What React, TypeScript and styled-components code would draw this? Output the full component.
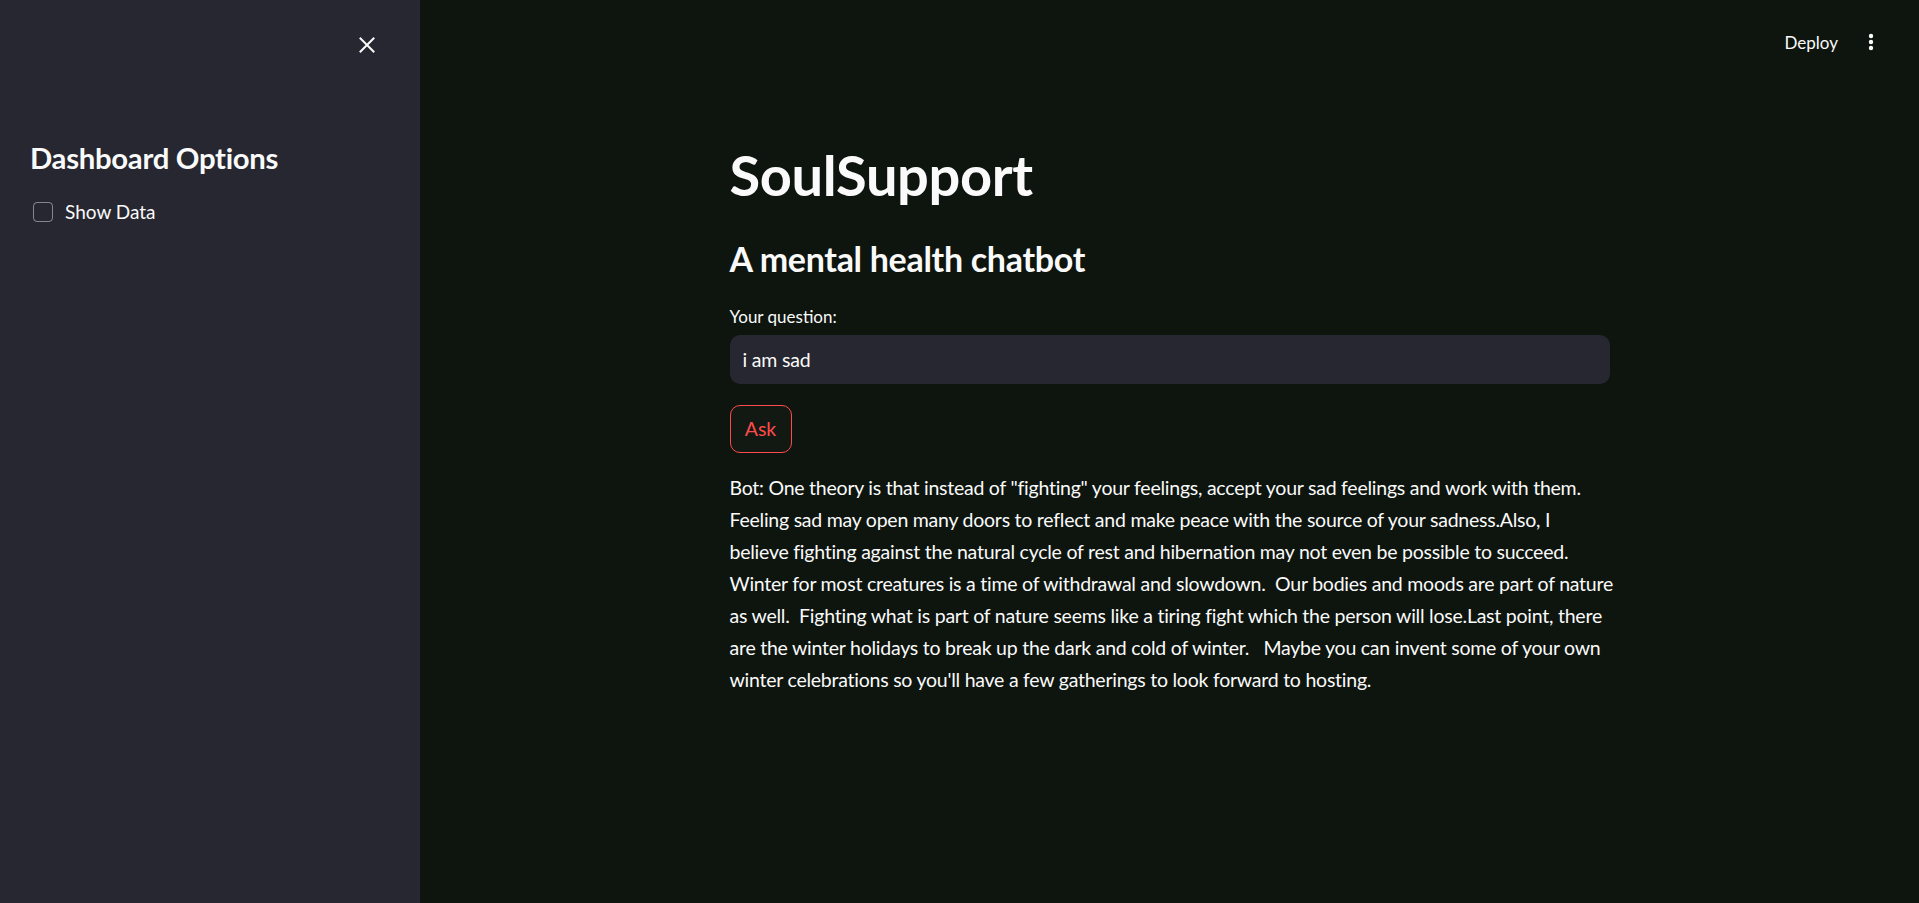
import React from "react";
import styled, { createGlobalStyle } from "styled-components";

const Global = createGlobalStyle`
  html, body { margin: 0; padding: 0; background: #0e150f; }
  body { font-family: Lato, "Noto Sans", sans-serif; color: #fafafa; }
  * { box-sizing: border-box; }
`;

const Shell = styled.div`
  display: flex;
  width: 1919px;
  height: 903px;
  overflow: hidden;
  background: #0e150f;
`;

const Sidebar = styled.aside`
  width: 420px;
  flex: none;
  background: #262730;
  display: flex;
  flex-direction: column;
  padding: 0 30px 0 30px;
`;

const SidebarTop = styled.div`
  height: 90px;
  display: flex;
  justify-content: flex-end;
  align-items: flex-start;
  padding-top: 36px;
  padding-right: 14px;
`;

const IconButton = styled.button`
  background: none;
  border: none;
  padding: 0;
  width: 18px;
  height: 18px;
  display: flex;
  align-items: center;
  justify-content: center;
  color: #fafafa;
  cursor: pointer;
`;

const SideHeading = styled.h2`
  margin: 50px 0 0 0;
  font-size: 29.3px;
  font-weight: 700;
  line-height: 1.2;
  letter-spacing: -0.3px;
`;

const CheckRow = styled.label`
  display: flex;
  align-items: center;
  gap: 12px;
  margin-top: 22px;
  margin-left: 3px;
  font-size: 19px;
  line-height: 1.6;
  color: #fafafa;
`;

const CheckBox = styled.span`
  width: 20px;
  height: 20px;
  border: 1px solid rgba(250, 250, 250, 0.45);
  border-radius: 4px;
  background: transparent;
`;

const Main = styled.main`
  flex: 1;
  display: flex;
  flex-direction: column;
`;

const Header = styled.header`
  height: 84px;
  display: flex;
  justify-content: flex-end;
  align-items: center;
  padding: 0 45px 0 0;
  gap: 30px;
  margin-bottom: -84px;
`;

const HeaderButton = styled.span`
  font-size: 17px;
  color: #fafafa;
  line-height: 1;
`;

const Content = styled.div`
  width: 880px;
  margin: 0 auto;
  padding-top: 141px;
  display: flex;
  flex-direction: column;
`;

const Title = styled.h1`
  margin: 0;
  font-size: 56px;
  font-weight: 700;
  line-height: 1.2;
  letter-spacing: -0.4px;
`;

const Subtitle = styled.h3`
  margin: 31px 0 0 0;
  font-size: 34px;
  font-weight: 700;
  line-height: 1.2;
  letter-spacing: -0.3px;
`;

const FieldLabel = styled.div`
  margin-top: 25px;
  font-size: 17px;
  line-height: 1.4;
`;

const Input = styled.div`
  margin-top: 6px;
  height: 49px;
  background: #262730;
  border-radius: 10px;
  display: flex;
  align-items: center;
  padding: 0 13px;
  font-size: 19.5px;
  letter-spacing: -0.2px;
`;

const AskButton = styled.button`
  margin-top: 21px;
  align-self: flex-start;
  width: 62px;
  height: 48px;
  border-radius: 10px;
  border: 1px solid #ff4b4b;
  background: #121912;
  color: #ff4b4b;
  font-family: inherit;
  font-size: 19.5px;
  padding: 0;
`;

const Answer = styled.p`
  margin: 19px 0 0 0;
  font-size: 19.5px;
  line-height: 32px;
  letter-spacing: -0.24px;
`;

const AnswerLine = styled.span`
  display: block;
  white-space: pre;
`;

const answerLines = [
  `Bot: One theory is that instead of "fighting" your feelings, accept your sad feelings and work with them.`,
  `Feeling sad may open many doors to reflect and make peace with the source of your sadness.Also, I`,
  `believe fighting against the natural cycle of rest and hibernation may not even be possible to succeed.`,
  `Winter for most creatures is a time of withdrawal and slowdown.  Our bodies and moods are part of nature`,
  `as well.  Fighting what is part of nature seems like a tiring fight which the person will lose.Last point, there`,
  `are the winter holidays to break up the dark and cold of winter.   Maybe you can invent some of your own`,
  `winter celebrations so you'll have a few gatherings to look forward to hosting.`,
];

export default function App() {
  return (
    <>
      <Global />
      <Shell>
        <Sidebar>
          <SidebarTop>
            <IconButton aria-label="Close sidebar">
              <svg width="16" height="16" viewBox="0 0 16 16">
                <path d="M1.5 1.5 L14.5 14.5 M14.5 1.5 L1.5 14.5" stroke="#fafafa" strokeWidth="2" strokeLinecap="square" />
              </svg>
            </IconButton>
          </SidebarTop>
          <SideHeading>Dashboard Options</SideHeading>
          <CheckRow>
            <CheckBox />
            Show Data
          </CheckRow>
        </Sidebar>
        <Main>
          <Header>
            <HeaderButton>Deploy</HeaderButton>
            <svg width="6" height="18" viewBox="0 0 6 18">
              <circle cx="3" cy="3" r="2.2" fill="#fafafa" />
              <circle cx="3" cy="9" r="2.2" fill="#fafafa" />
              <circle cx="3" cy="15" r="2.2" fill="#fafafa" />
            </svg>
          </Header>
          <Content>
            <Title>SoulSupport</Title>
            <Subtitle>A mental health chatbot</Subtitle>
            <FieldLabel>Your question:</FieldLabel>
            <Input>i am sad</Input>
            <AskButton>Ask</AskButton>
            <Answer>
              {answerLines.map((line, i) => (
                <AnswerLine key={i}>{line}</AnswerLine>
              ))}
            </Answer>
          </Content>
        </Main>
      </Shell>
    </>
  );
}
